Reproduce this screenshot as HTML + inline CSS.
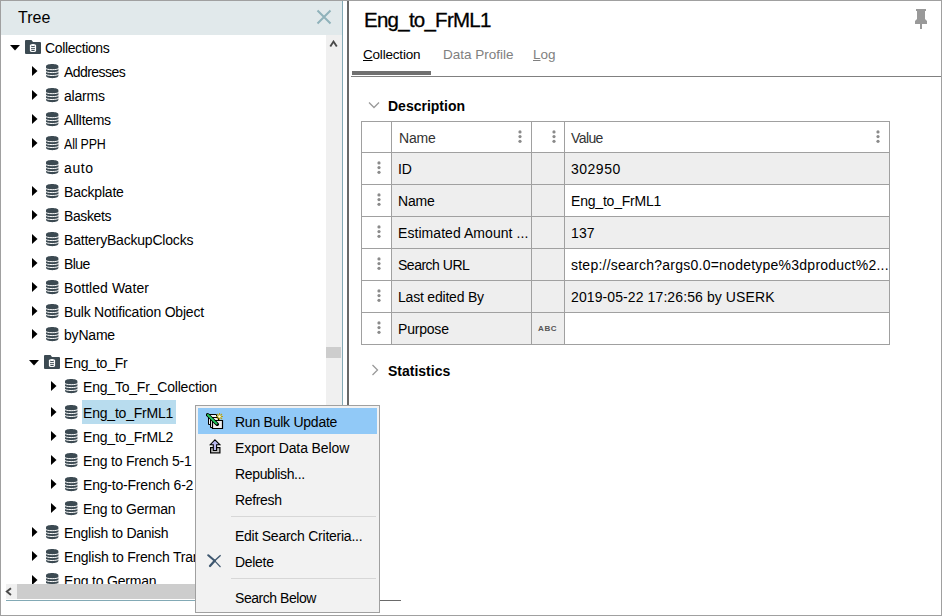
<!DOCTYPE html>
<html><head><meta charset="utf-8">
<style>
*{margin:0;padding:0;box-sizing:border-box}
html,body{width:942px;height:616px;overflow:hidden;background:#fff}
body{position:relative;font-family:"Liberation Sans",sans-serif;font-size:14px;letter-spacing:-0.2px;color:#000}
.a{position:absolute}
.t{position:absolute;white-space:nowrap;line-height:16px}
</style></head><body>
<!-- outer borders -->
<div class="a" style="left:0;top:0;width:942px;height:1px;background:#a0a0a0"></div>
<div class="a" style="left:0;top:0;width:1px;height:616px;background:#a0a0a0"></div>
<div class="a" style="left:941px;top:0;width:1px;height:616px;background:#a0a0a0"></div>
<div class="a" style="left:0;top:615px;width:942px;height:1px;background:#a0a0a0"></div>

<!-- TREE PANEL -->
<div class="a" style="left:1px;top:1px;width:341px;height:34px;background:#e1e9eb"></div>
<div class="t" style="left:18px;top:9px;font-size:16px;line-height:18px;letter-spacing:0">Tree</div>
<svg class="a" style="left:316px;top:9px" width="16" height="16" viewBox="0 0 16 16"><path d="M1.5 1.5L14.5 14.5M14.5 1.5L1.5 14.5" stroke="#8fb2ba" stroke-width="2" fill="none"/></svg>
<div class="a" style="left:342px;top:1px;width:1px;height:600px;background:#82a9b5"></div>
<div class="a" style="left:347px;top:1px;width:2px;height:601px;background:#686868"></div>

<!-- vertical scrollbar -->
<div class="a" style="left:326px;top:35px;width:16px;height:549px;background:#f0f0f0"></div>
<svg class="a" style="left:329px;top:40px" width="10" height="8" viewBox="0 0 10 8"><path d="M1.3 6.6L4.5 1.6L7.8 6.6" stroke="#4a4a4a" stroke-width="1.9" fill="none"/></svg>
<div class="a" style="left:326px;top:347px;width:15px;height:11px;background:#cdcdcd"></div>

<!-- horizontal scrollbar -->
<div class="a" style="left:6px;top:584px;width:336px;height:15px;background:#f0f0f0"></div>
<svg class="a" style="left:5px;top:587px" width="8" height="10" viewBox="0 0 8 10"><path d="M6 1.2L1.8 4.6L6 8" stroke="#4a4a4a" stroke-width="1.9" fill="none"/></svg>
<div class="a" style="left:17px;top:584px;width:325px;height:15px;background:#cdcdcd"></div>
<div class="a" style="left:6px;top:600px;width:337px;height:1px;background:#82a9b5"></div>

<div id="tree" class="a" style="left:1px;top:35px;width:325px;height:549px;overflow:hidden">
<svg class="a" style="left:9px;top:10px" width="10" height="6" viewBox="0 0 10 6"><path d="M0 0H10L5 5.5Z" fill="#000"/></svg>
<svg class="a" style="left:24px;top:5px" width="16" height="14" viewBox="0 0 16 14"><path d="M0 1Q0 0 1 0H6.5L8 2H15Q16 2 16 3V13Q16 14 15 14H1Q0 14 0 13Z" fill="#3c4a52"/><path d="M4.9 5.6Q4.9 4 8 3.9Q11.1 4 11.1 5.6V10.6Q11.1 12.1 8 12.1Q4.9 12.1 4.9 10.6Z" fill="#fff"/><path d="M6.1 6.2Q8 7.2 9.9 6.2M6.1 8.3Q8 9.3 9.9 8.3M6.2 10.2Q8 11.1 9.8 10.2" stroke="#3c4a52" stroke-width="1" fill="none"/></svg>
<div class="t" style="left:44px;top:5px;letter-spacing:-0.37px">Collections</div>
<svg class="a" style="left:31px;top:31px" width="6" height="10" viewBox="0 0 6 10"><path d="M0 0L5.5 5L0 10Z" fill="#000"/></svg>
<svg class="a" style="left:44px;top:29px" width="15" height="15" viewBox="0 0 15 15"><path d="M1 2.4C1 -0.8 13.4 -0.8 13.4 2.4V11.8C13.4 15 1 15 1 11.8Z" fill="#3c4a52"/><path d="M0.6 4.2A6.6 1.5 0 0 0 13.8 4.2M0.6 7.1A6.6 1.5 0 0 0 13.8 7.1M0.6 10A6.6 1.5 0 0 0 13.8 10" stroke="#fff" stroke-width="1" fill="none"/></svg>
<div class="t" style="left:63px;top:29px;letter-spacing:-0.55px">Addresses</div>
<svg class="a" style="left:31px;top:55px" width="6" height="10" viewBox="0 0 6 10"><path d="M0 0L5.5 5L0 10Z" fill="#000"/></svg>
<svg class="a" style="left:44px;top:53px" width="15" height="15" viewBox="0 0 15 15"><path d="M1 2.4C1 -0.8 13.4 -0.8 13.4 2.4V11.8C13.4 15 1 15 1 11.8Z" fill="#3c4a52"/><path d="M0.6 4.2A6.6 1.5 0 0 0 13.8 4.2M0.6 7.1A6.6 1.5 0 0 0 13.8 7.1M0.6 10A6.6 1.5 0 0 0 13.8 10" stroke="#fff" stroke-width="1" fill="none"/></svg>
<div class="t" style="left:63px;top:53px;">alarms</div>
<svg class="a" style="left:31px;top:79px" width="6" height="10" viewBox="0 0 6 10"><path d="M0 0L5.5 5L0 10Z" fill="#000"/></svg>
<svg class="a" style="left:44px;top:77px" width="15" height="15" viewBox="0 0 15 15"><path d="M1 2.4C1 -0.8 13.4 -0.8 13.4 2.4V11.8C13.4 15 1 15 1 11.8Z" fill="#3c4a52"/><path d="M0.6 4.2A6.6 1.5 0 0 0 13.8 4.2M0.6 7.1A6.6 1.5 0 0 0 13.8 7.1M0.6 10A6.6 1.5 0 0 0 13.8 10" stroke="#fff" stroke-width="1" fill="none"/></svg>
<div class="t" style="left:63px;top:77px;letter-spacing:-0.4px">AllItems</div>
<svg class="a" style="left:31px;top:103px" width="6" height="10" viewBox="0 0 6 10"><path d="M0 0L5.5 5L0 10Z" fill="#000"/></svg>
<svg class="a" style="left:44px;top:101px" width="15" height="15" viewBox="0 0 15 15"><path d="M1 2.4C1 -0.8 13.4 -0.8 13.4 2.4V11.8C13.4 15 1 15 1 11.8Z" fill="#3c4a52"/><path d="M0.6 4.2A6.6 1.5 0 0 0 13.8 4.2M0.6 7.1A6.6 1.5 0 0 0 13.8 7.1M0.6 10A6.6 1.5 0 0 0 13.8 10" stroke="#fff" stroke-width="1" fill="none"/></svg>
<div class="t" style="left:63px;top:101px;letter-spacing:-0.2px;transform:scaleX(0.89);transform-origin:0 0">All PPH</div>
<svg class="a" style="left:44px;top:125px" width="15" height="15" viewBox="0 0 15 15"><path d="M1 2.4C1 -0.8 13.4 -0.8 13.4 2.4V11.8C13.4 15 1 15 1 11.8Z" fill="#3c4a52"/><path d="M0.6 4.2A6.6 1.5 0 0 0 13.8 4.2M0.6 7.1A6.6 1.5 0 0 0 13.8 7.1M0.6 10A6.6 1.5 0 0 0 13.8 10" stroke="#fff" stroke-width="1" fill="none"/></svg>
<div class="t" style="left:63px;top:125px;letter-spacing:0.6px">auto</div>
<svg class="a" style="left:31px;top:151px" width="6" height="10" viewBox="0 0 6 10"><path d="M0 0L5.5 5L0 10Z" fill="#000"/></svg>
<svg class="a" style="left:44px;top:149px" width="15" height="15" viewBox="0 0 15 15"><path d="M1 2.4C1 -0.8 13.4 -0.8 13.4 2.4V11.8C13.4 15 1 15 1 11.8Z" fill="#3c4a52"/><path d="M0.6 4.2A6.6 1.5 0 0 0 13.8 4.2M0.6 7.1A6.6 1.5 0 0 0 13.8 7.1M0.6 10A6.6 1.5 0 0 0 13.8 10" stroke="#fff" stroke-width="1" fill="none"/></svg>
<div class="t" style="left:63px;top:149px;">Backplate</div>
<svg class="a" style="left:31px;top:175px" width="6" height="10" viewBox="0 0 6 10"><path d="M0 0L5.5 5L0 10Z" fill="#000"/></svg>
<svg class="a" style="left:44px;top:173px" width="15" height="15" viewBox="0 0 15 15"><path d="M1 2.4C1 -0.8 13.4 -0.8 13.4 2.4V11.8C13.4 15 1 15 1 11.8Z" fill="#3c4a52"/><path d="M0.6 4.2A6.6 1.5 0 0 0 13.8 4.2M0.6 7.1A6.6 1.5 0 0 0 13.8 7.1M0.6 10A6.6 1.5 0 0 0 13.8 10" stroke="#fff" stroke-width="1" fill="none"/></svg>
<div class="t" style="left:63px;top:173px;letter-spacing:-0.4px">Baskets</div>
<svg class="a" style="left:31px;top:199px" width="6" height="10" viewBox="0 0 6 10"><path d="M0 0L5.5 5L0 10Z" fill="#000"/></svg>
<svg class="a" style="left:44px;top:197px" width="15" height="15" viewBox="0 0 15 15"><path d="M1 2.4C1 -0.8 13.4 -0.8 13.4 2.4V11.8C13.4 15 1 15 1 11.8Z" fill="#3c4a52"/><path d="M0.6 4.2A6.6 1.5 0 0 0 13.8 4.2M0.6 7.1A6.6 1.5 0 0 0 13.8 7.1M0.6 10A6.6 1.5 0 0 0 13.8 10" stroke="#fff" stroke-width="1" fill="none"/></svg>
<div class="t" style="left:63px;top:197px;">BatteryBackupClocks</div>
<svg class="a" style="left:31px;top:223px" width="6" height="10" viewBox="0 0 6 10"><path d="M0 0L5.5 5L0 10Z" fill="#000"/></svg>
<svg class="a" style="left:44px;top:221px" width="15" height="15" viewBox="0 0 15 15"><path d="M1 2.4C1 -0.8 13.4 -0.8 13.4 2.4V11.8C13.4 15 1 15 1 11.8Z" fill="#3c4a52"/><path d="M0.6 4.2A6.6 1.5 0 0 0 13.8 4.2M0.6 7.1A6.6 1.5 0 0 0 13.8 7.1M0.6 10A6.6 1.5 0 0 0 13.8 10" stroke="#fff" stroke-width="1" fill="none"/></svg>
<div class="t" style="left:63px;top:221px;letter-spacing:-0.6px">Blue</div>
<svg class="a" style="left:31px;top:247px" width="6" height="10" viewBox="0 0 6 10"><path d="M0 0L5.5 5L0 10Z" fill="#000"/></svg>
<svg class="a" style="left:44px;top:245px" width="15" height="15" viewBox="0 0 15 15"><path d="M1 2.4C1 -0.8 13.4 -0.8 13.4 2.4V11.8C13.4 15 1 15 1 11.8Z" fill="#3c4a52"/><path d="M0.6 4.2A6.6 1.5 0 0 0 13.8 4.2M0.6 7.1A6.6 1.5 0 0 0 13.8 7.1M0.6 10A6.6 1.5 0 0 0 13.8 10" stroke="#fff" stroke-width="1" fill="none"/></svg>
<div class="t" style="left:63px;top:245px;letter-spacing:0.05px">Bottled Water</div>
<svg class="a" style="left:31px;top:271px" width="6" height="10" viewBox="0 0 6 10"><path d="M0 0L5.5 5L0 10Z" fill="#000"/></svg>
<svg class="a" style="left:44px;top:269px" width="15" height="15" viewBox="0 0 15 15"><path d="M1 2.4C1 -0.8 13.4 -0.8 13.4 2.4V11.8C13.4 15 1 15 1 11.8Z" fill="#3c4a52"/><path d="M0.6 4.2A6.6 1.5 0 0 0 13.8 4.2M0.6 7.1A6.6 1.5 0 0 0 13.8 7.1M0.6 10A6.6 1.5 0 0 0 13.8 10" stroke="#fff" stroke-width="1" fill="none"/></svg>
<div class="t" style="left:63px;top:269px;">Bulk Notification Object</div>
<svg class="a" style="left:31px;top:294px" width="6" height="10" viewBox="0 0 6 10"><path d="M0 0L5.5 5L0 10Z" fill="#000"/></svg>
<svg class="a" style="left:44px;top:292px" width="15" height="15" viewBox="0 0 15 15"><path d="M1 2.4C1 -0.8 13.4 -0.8 13.4 2.4V11.8C13.4 15 1 15 1 11.8Z" fill="#3c4a52"/><path d="M0.6 4.2A6.6 1.5 0 0 0 13.8 4.2M0.6 7.1A6.6 1.5 0 0 0 13.8 7.1M0.6 10A6.6 1.5 0 0 0 13.8 10" stroke="#fff" stroke-width="1" fill="none"/></svg>
<div class="t" style="left:63px;top:292px;">byName</div>
<svg class="a" style="left:28px;top:325px" width="10" height="6" viewBox="0 0 10 6"><path d="M0 0H10L5 5.5Z" fill="#000"/></svg>
<svg class="a" style="left:43px;top:320px" width="16" height="14" viewBox="0 0 16 14"><path d="M0 1Q0 0 1 0H6.5L8 2H15Q16 2 16 3V13Q16 14 15 14H1Q0 14 0 13Z" fill="#3c4a52"/><path d="M4.9 5.6Q4.9 4 8 3.9Q11.1 4 11.1 5.6V10.6Q11.1 12.1 8 12.1Q4.9 12.1 4.9 10.6Z" fill="#fff"/><path d="M6.1 6.2Q8 7.2 9.9 6.2M6.1 8.3Q8 9.3 9.9 8.3M6.2 10.2Q8 11.1 9.8 10.2" stroke="#3c4a52" stroke-width="1" fill="none"/></svg>
<div class="t" style="left:63px;top:320px;">Eng_to_Fr</div>
<svg class="a" style="left:50px;top:346px" width="6" height="10" viewBox="0 0 6 10"><path d="M0 0L5.5 5L0 10Z" fill="#000"/></svg>
<svg class="a" style="left:63px;top:344px" width="15" height="15" viewBox="0 0 15 15"><path d="M1 2.4C1 -0.8 13.4 -0.8 13.4 2.4V11.8C13.4 15 1 15 1 11.8Z" fill="#3c4a52"/><path d="M0.6 4.2A6.6 1.5 0 0 0 13.8 4.2M0.6 7.1A6.6 1.5 0 0 0 13.8 7.1M0.6 10A6.6 1.5 0 0 0 13.8 10" stroke="#fff" stroke-width="1" fill="none"/></svg>
<div class="t" style="left:82px;top:344px;">Eng_To_Fr_Collection</div>
<svg class="a" style="left:50px;top:372px" width="6" height="10" viewBox="0 0 6 10"><path d="M0 0L5.5 5L0 10Z" fill="#000"/></svg>
<svg class="a" style="left:63px;top:370px" width="15" height="15" viewBox="0 0 15 15"><path d="M1 2.4C1 -0.8 13.4 -0.8 13.4 2.4V11.8C13.4 15 1 15 1 11.8Z" fill="#3c4a52"/><path d="M0.6 4.2A6.6 1.5 0 0 0 13.8 4.2M0.6 7.1A6.6 1.5 0 0 0 13.8 7.1M0.6 10A6.6 1.5 0 0 0 13.8 10" stroke="#fff" stroke-width="1" fill="none"/></svg>
<div class="a" style="left:81px;top:365px;width:94px;height:24px;background:#b8dcee"></div>
<div class="t" style="left:82px;top:370px;">Eng_to_FrML1</div>
<svg class="a" style="left:50px;top:396px" width="6" height="10" viewBox="0 0 6 10"><path d="M0 0L5.5 5L0 10Z" fill="#000"/></svg>
<svg class="a" style="left:63px;top:394px" width="15" height="15" viewBox="0 0 15 15"><path d="M1 2.4C1 -0.8 13.4 -0.8 13.4 2.4V11.8C13.4 15 1 15 1 11.8Z" fill="#3c4a52"/><path d="M0.6 4.2A6.6 1.5 0 0 0 13.8 4.2M0.6 7.1A6.6 1.5 0 0 0 13.8 7.1M0.6 10A6.6 1.5 0 0 0 13.8 10" stroke="#fff" stroke-width="1" fill="none"/></svg>
<div class="t" style="left:82px;top:394px;">Eng_to_FrML2</div>
<svg class="a" style="left:50px;top:420px" width="6" height="10" viewBox="0 0 6 10"><path d="M0 0L5.5 5L0 10Z" fill="#000"/></svg>
<svg class="a" style="left:63px;top:418px" width="15" height="15" viewBox="0 0 15 15"><path d="M1 2.4C1 -0.8 13.4 -0.8 13.4 2.4V11.8C13.4 15 1 15 1 11.8Z" fill="#3c4a52"/><path d="M0.6 4.2A6.6 1.5 0 0 0 13.8 4.2M0.6 7.1A6.6 1.5 0 0 0 13.8 7.1M0.6 10A6.6 1.5 0 0 0 13.8 10" stroke="#fff" stroke-width="1" fill="none"/></svg>
<div class="t" style="left:82px;top:418px;">Eng to French 5-1</div>
<svg class="a" style="left:50px;top:444px" width="6" height="10" viewBox="0 0 6 10"><path d="M0 0L5.5 5L0 10Z" fill="#000"/></svg>
<svg class="a" style="left:63px;top:442px" width="15" height="15" viewBox="0 0 15 15"><path d="M1 2.4C1 -0.8 13.4 -0.8 13.4 2.4V11.8C13.4 15 1 15 1 11.8Z" fill="#3c4a52"/><path d="M0.6 4.2A6.6 1.5 0 0 0 13.8 4.2M0.6 7.1A6.6 1.5 0 0 0 13.8 7.1M0.6 10A6.6 1.5 0 0 0 13.8 10" stroke="#fff" stroke-width="1" fill="none"/></svg>
<div class="t" style="left:82px;top:442px;">Eng-to-French 6-2</div>
<svg class="a" style="left:50px;top:468px" width="6" height="10" viewBox="0 0 6 10"><path d="M0 0L5.5 5L0 10Z" fill="#000"/></svg>
<svg class="a" style="left:63px;top:466px" width="15" height="15" viewBox="0 0 15 15"><path d="M1 2.4C1 -0.8 13.4 -0.8 13.4 2.4V11.8C13.4 15 1 15 1 11.8Z" fill="#3c4a52"/><path d="M0.6 4.2A6.6 1.5 0 0 0 13.8 4.2M0.6 7.1A6.6 1.5 0 0 0 13.8 7.1M0.6 10A6.6 1.5 0 0 0 13.8 10" stroke="#fff" stroke-width="1" fill="none"/></svg>
<div class="t" style="left:82px;top:466px;">Eng to German</div>
<svg class="a" style="left:31px;top:492px" width="6" height="10" viewBox="0 0 6 10"><path d="M0 0L5.5 5L0 10Z" fill="#000"/></svg>
<svg class="a" style="left:44px;top:490px" width="15" height="15" viewBox="0 0 15 15"><path d="M1 2.4C1 -0.8 13.4 -0.8 13.4 2.4V11.8C13.4 15 1 15 1 11.8Z" fill="#3c4a52"/><path d="M0.6 4.2A6.6 1.5 0 0 0 13.8 4.2M0.6 7.1A6.6 1.5 0 0 0 13.8 7.1M0.6 10A6.6 1.5 0 0 0 13.8 10" stroke="#fff" stroke-width="1" fill="none"/></svg>
<div class="t" style="left:63px;top:490px;letter-spacing:-0.27px">English to Danish</div>
<svg class="a" style="left:31px;top:516px" width="6" height="10" viewBox="0 0 6 10"><path d="M0 0L5.5 5L0 10Z" fill="#000"/></svg>
<svg class="a" style="left:44px;top:514px" width="15" height="15" viewBox="0 0 15 15"><path d="M1 2.4C1 -0.8 13.4 -0.8 13.4 2.4V11.8C13.4 15 1 15 1 11.8Z" fill="#3c4a52"/><path d="M0.6 4.2A6.6 1.5 0 0 0 13.8 4.2M0.6 7.1A6.6 1.5 0 0 0 13.8 7.1M0.6 10A6.6 1.5 0 0 0 13.8 10" stroke="#fff" stroke-width="1" fill="none"/></svg>
<div class="t" style="left:63px;top:514px;">English to French Translation</div>
<svg class="a" style="left:31px;top:540px" width="6" height="10" viewBox="0 0 6 10"><path d="M0 0L5.5 5L0 10Z" fill="#000"/></svg>
<svg class="a" style="left:44px;top:538px" width="15" height="15" viewBox="0 0 15 15"><path d="M1 2.4C1 -0.8 13.4 -0.8 13.4 2.4V11.8C13.4 15 1 15 1 11.8Z" fill="#3c4a52"/><path d="M0.6 4.2A6.6 1.5 0 0 0 13.8 4.2M0.6 7.1A6.6 1.5 0 0 0 13.8 7.1M0.6 10A6.6 1.5 0 0 0 13.8 10" stroke="#fff" stroke-width="1" fill="none"/></svg>
<div class="t" style="left:63px;top:538px;">Eng to German</div>
</div>

<!-- RIGHT PANEL -->
<div class="t" style="left:364px;top:9px;font-size:20.5px;line-height:22px;letter-spacing:-0.75px;-webkit-text-stroke:0.3px #000">Eng_to_FrML1</div>
<svg class="a" style="left:914px;top:8px" width="14" height="22" viewBox="0 0 14 22"><path d="M2 1h10v2h-1v8l2 2v3H1v-3l2-2V3H2z" fill="#999"/><rect x="6" y="15" width="2" height="6" fill="#999"/></svg>
<div class="t" style="left:363px;top:47px;font-size:13.5px;letter-spacing:-0.2px"><u>C</u>ollection</div>
<div class="t" style="left:443px;top:47px;font-size:13.5px;letter-spacing:0;color:#808080">Data Profile</div>
<div class="t" style="left:533px;top:47px;font-size:13.5px;letter-spacing:0;color:#808080"><u>L</u>og</div>
<div class="a" style="left:352px;top:71px;width:79px;height:4px;background:#707070"></div>
<div class="a" style="left:351px;top:76px;width:590px;height:1px;background:#808080"></div>

<!-- TABLE -->
<svg class="a" style="left:368px;top:101px" width="12" height="8" viewBox="0 0 12 8"><path d="M1 1.5L6 6.5L11 1.5" stroke="#9a9a9a" stroke-width="1.3" fill="none"/></svg>
<div class="t" style="left:388px;top:98px;font-weight:bold;font-size:14px;letter-spacing:0">Description</div>
<svg class="a" style="left:371px;top:364px" width="8" height="12" viewBox="0 0 8 12"><path d="M1.5 1L6.5 6L1.5 11" stroke="#9a9a9a" stroke-width="1.3" fill="none"/></svg>
<div class="t" style="left:388px;top:363px;font-weight:bold;font-size:14px;letter-spacing:0">Statistics</div>
<div class="a" style="left:391px;top:152px;width:173px;height:32px;background:#eeeeee"></div>
<div class="a" style="left:564px;top:152px;width:325px;height:32px;background:#eeeeee"></div>
<div class="a" style="left:391px;top:184px;width:173px;height:32px;background:#eeeeee"></div>
<div class="a" style="left:391px;top:216px;width:173px;height:32px;background:#eeeeee"></div>
<div class="a" style="left:564px;top:216px;width:325px;height:32px;background:#eeeeee"></div>
<div class="a" style="left:391px;top:248px;width:173px;height:32px;background:#eeeeee"></div>
<div class="a" style="left:391px;top:280px;width:173px;height:32px;background:#eeeeee"></div>
<div class="a" style="left:564px;top:280px;width:325px;height:32px;background:#eeeeee"></div>
<div class="a" style="left:391px;top:312px;width:173px;height:32px;background:#eeeeee"></div>
<div class="a" style="left:361px;top:121px;width:529px;height:1px;background:#a0a0a0"></div>
<div class="a" style="left:361px;top:152px;width:529px;height:1px;background:#a0a0a0"></div>
<div class="a" style="left:361px;top:184px;width:529px;height:1px;background:#a0a0a0"></div>
<div class="a" style="left:361px;top:216px;width:529px;height:1px;background:#a0a0a0"></div>
<div class="a" style="left:361px;top:248px;width:529px;height:1px;background:#a0a0a0"></div>
<div class="a" style="left:361px;top:280px;width:529px;height:1px;background:#a0a0a0"></div>
<div class="a" style="left:361px;top:312px;width:529px;height:1px;background:#a0a0a0"></div>
<div class="a" style="left:361px;top:344px;width:529px;height:1px;background:#a0a0a0"></div>
<div class="a" style="left:361px;top:121px;width:1px;height:224px;background:#a0a0a0"></div>
<div class="a" style="left:391px;top:121px;width:1px;height:224px;background:#a0a0a0"></div>
<div class="a" style="left:531px;top:121px;width:1px;height:224px;background:#a0a0a0"></div>
<div class="a" style="left:564px;top:121px;width:1px;height:224px;background:#a0a0a0"></div>
<div class="a" style="left:889px;top:121px;width:1px;height:224px;background:#a0a0a0"></div>
<svg class="a" style="left:518px;top:130px" width="4" height="14" viewBox="0 0 4 14"><circle cx="2" cy="1.9" r="1.6" fill="#8a8a8a"/><circle cx="2" cy="6.6" r="1.6" fill="#8a8a8a"/><circle cx="2" cy="11.3" r="1.6" fill="#8a8a8a"/></svg>
<svg class="a" style="left:552px;top:130px" width="4" height="14" viewBox="0 0 4 14"><circle cx="2" cy="1.9" r="1.6" fill="#8a8a8a"/><circle cx="2" cy="6.6" r="1.6" fill="#8a8a8a"/><circle cx="2" cy="11.3" r="1.6" fill="#8a8a8a"/></svg>
<svg class="a" style="left:876px;top:130px" width="4" height="14" viewBox="0 0 4 14"><circle cx="2" cy="1.9" r="1.6" fill="#8a8a8a"/><circle cx="2" cy="6.6" r="1.6" fill="#8a8a8a"/><circle cx="2" cy="11.3" r="1.6" fill="#8a8a8a"/></svg>
<div class="t" style="left:399px;top:130px;color:#333">Name</div>
<div class="t" style="left:571px;top:130px;letter-spacing:-0.6px;color:#333">Value</div>
<svg class="a" style="left:377px;top:161px" width="4" height="14" viewBox="0 0 4 14"><circle cx="2" cy="1.9" r="1.6" fill="#8a8a8a"/><circle cx="2" cy="6.6" r="1.6" fill="#8a8a8a"/><circle cx="2" cy="11.3" r="1.6" fill="#8a8a8a"/></svg>
<div class="t" style="left:398px;top:161px;">ID</div>
<div class="t" style="left:571px;top:161px;letter-spacing:0.5px">302950</div>
<svg class="a" style="left:377px;top:193px" width="4" height="14" viewBox="0 0 4 14"><circle cx="2" cy="1.9" r="1.6" fill="#8a8a8a"/><circle cx="2" cy="6.6" r="1.6" fill="#8a8a8a"/><circle cx="2" cy="11.3" r="1.6" fill="#8a8a8a"/></svg>
<div class="t" style="left:398px;top:193px;">Name</div>
<div class="t" style="left:571px;top:193px;">Eng_to_FrML1</div>
<svg class="a" style="left:377px;top:225px" width="4" height="14" viewBox="0 0 4 14"><circle cx="2" cy="1.9" r="1.6" fill="#8a8a8a"/><circle cx="2" cy="6.6" r="1.6" fill="#8a8a8a"/><circle cx="2" cy="11.3" r="1.6" fill="#8a8a8a"/></svg>
<div class="t" style="left:398px;top:225px;letter-spacing:0.06px">Estimated Amount ...</div>
<div class="t" style="left:571px;top:225px;letter-spacing:0.1px">137</div>
<svg class="a" style="left:377px;top:257px" width="4" height="14" viewBox="0 0 4 14"><circle cx="2" cy="1.9" r="1.6" fill="#8a8a8a"/><circle cx="2" cy="6.6" r="1.6" fill="#8a8a8a"/><circle cx="2" cy="11.3" r="1.6" fill="#8a8a8a"/></svg>
<div class="t" style="left:398px;top:257px;letter-spacing:-0.49px">Search URL</div>
<div class="t" style="left:571px;top:257px;letter-spacing:0.24px">step://search?args0.0=nodetype%3dproduct%2...</div>
<svg class="a" style="left:377px;top:289px" width="4" height="14" viewBox="0 0 4 14"><circle cx="2" cy="1.9" r="1.6" fill="#8a8a8a"/><circle cx="2" cy="6.6" r="1.6" fill="#8a8a8a"/><circle cx="2" cy="11.3" r="1.6" fill="#8a8a8a"/></svg>
<div class="t" style="left:398px;top:289px;">Last edited By</div>
<div class="t" style="left:571px;top:289px;letter-spacing:0.1px">2019-05-22 17:26:56 by USERK</div>
<svg class="a" style="left:377px;top:321px" width="4" height="14" viewBox="0 0 4 14"><circle cx="2" cy="1.9" r="1.6" fill="#8a8a8a"/><circle cx="2" cy="6.6" r="1.6" fill="#8a8a8a"/><circle cx="2" cy="11.3" r="1.6" fill="#8a8a8a"/></svg>
<div class="t" style="left:398px;top:321px;">Purpose</div>
<div class="t" style="left:538px;top:323px;font-size:8px;font-weight:bold;color:#555;letter-spacing:0.6px;line-height:12px">ABC</div>
<!-- MENU -->
<div class="a" style="left:380px;top:600px;width:21px;height:1px;background:#6a6a6a"></div>
<div class="a" style="left:195px;top:405px;width:185px;height:208px;background:#f2f2f2;border:1px solid #a0a0a0"></div>
<div class="a" style="left:198px;top:408px;width:179px;height:26px;background:#91c9f7"></div>
<div class="t" style="left:235px;top:414px;letter-spacing:-0.25px">Run Bulk Update</div>
<div class="t" style="left:235px;top:440px;letter-spacing:-0.1px">Export Data Below</div>
<div class="t" style="left:235px;top:466px;letter-spacing:-0.35px">Republish...</div>
<div class="t" style="left:235px;top:492px;letter-spacing:-0.35px">Refresh</div>
<div class="t" style="left:235px;top:528px;letter-spacing:-0.25px">Edit Search Criteria...</div>
<div class="t" style="left:235px;top:554px;letter-spacing:-0.3px">Delete</div>
<div class="t" style="left:235px;top:590px;letter-spacing:-0.45px">Search Below</div>
<div class="a" style="left:231px;top:516px;width:145px;height:1px;background:#d7d7d7"></div>
<div class="a" style="left:231px;top:578px;width:145px;height:1px;background:#d7d7d7"></div>
<svg class="a" style="left:206px;top:412px" width="18" height="18" viewBox="0 0 18 18">
<path d="M2.5 2.5h8v10h-8z" fill="#f4f4f4" stroke="#000" stroke-width="1"/>
<path d="M4.5 5.5h8v10h-8z" fill="#f4f4f4" stroke="#000" stroke-width="1"/>
<path d="M6.5 8.5h10v8h-10z" fill="#eeeeee" stroke="#000" stroke-width="1.2"/>
<path d="M1.6 2.8L11.2 12.2" stroke="#000" stroke-width="3.6" stroke-linecap="round"/>
<path d="M1.9 3L10.6 11.6" stroke="#21c85a" stroke-width="1.9" stroke-linecap="round"/>
<path d="M13.5 1v7M10 4.5h7M11 2l5 5M16 2l-5 5" stroke="#b5a21a" stroke-width="1.1"/>
<circle cx="13.5" cy="4.5" r="1.3" fill="#fffbe0"/>
</svg>
<svg class="a" style="left:209px;top:439px" width="12" height="15" viewBox="0 0 12 15">
<rect x="1.6" y="8.6" width="9.3" height="5.3" fill="#c4c4c4" stroke="#000" stroke-width="1.2"/>
<path d="M5.9 0.9L1.2 5.7H4.3V11.5H7.6V5.7H10.8Z" fill="#b9b9ef" stroke="#000" stroke-width="1.1" stroke-linejoin="miter"/>
</svg>
<svg class="a" style="left:207px;top:554px" width="15" height="15" viewBox="0 0 15 15"><path d="M1.3 1.3L7.7 6.8" stroke="#3f5870" stroke-width="2.1" stroke-linecap="round"/><path d="M7.7 6.8L13.5 13" stroke="#3f5870" stroke-width="1.1"/><path d="M13.6 1.2L7.7 6.8" stroke="#3f5870" stroke-width="1.4"/><path d="M7.7 6.8L3 12" stroke="#3f5870" stroke-width="2.3" stroke-linecap="round"/></svg>
</body></html>
